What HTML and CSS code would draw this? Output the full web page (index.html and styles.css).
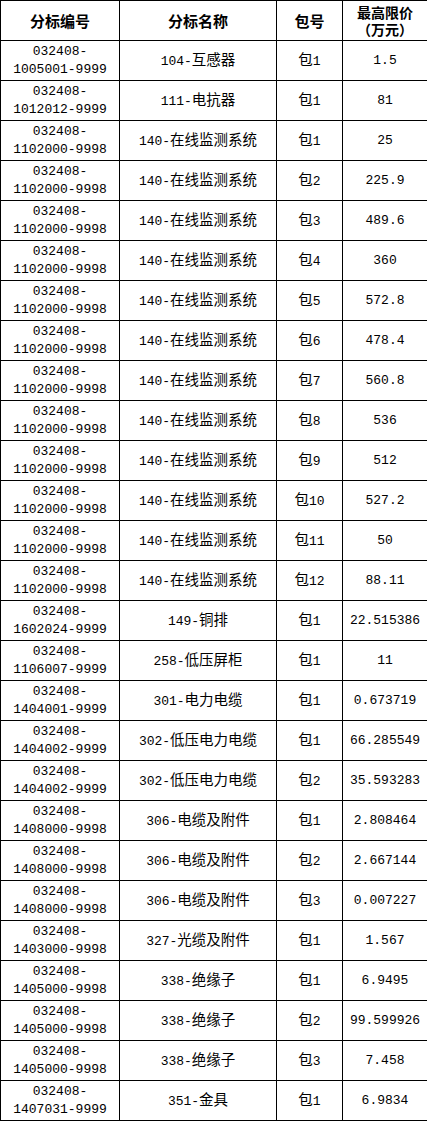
FILE: index.html
```html
<!DOCTYPE html>
<html lang="zh-CN">
<head>
<meta charset="utf-8">
<title>分标限价</title>
<link rel="stylesheet" href="styles.css">
</head>
<body>
<table class="price-table">
  <colgroup>
    <col class="c-code">
    <col class="c-name">
    <col class="c-pkg">
    <col class="c-price">
  </colgroup>
  <thead>
    <tr>
      <th>分标编号</th>
      <th>分标名称</th>
      <th>包号</th>
      <th class="two-line"><span class="hl">最高限价</span><span class="hl">（万元）</span></th>
    </tr>
  </thead>
  <tbody>
    <tr><td>032408-<br>1005001-9999</td><td>104-<span class="zh">互感器</span></td><td><span class="zh">包</span>1</td><td>1.5</td></tr>
    <tr><td>032408-<br>1012012-9999</td><td>111-<span class="zh">电抗器</span></td><td><span class="zh">包</span>1</td><td>81</td></tr>
    <tr><td>032408-<br>1102000-9998</td><td>140-<span class="zh">在线监测系统</span></td><td><span class="zh">包</span>1</td><td>25</td></tr>
    <tr><td>032408-<br>1102000-9998</td><td>140-<span class="zh">在线监测系统</span></td><td><span class="zh">包</span>2</td><td>225.9</td></tr>
    <tr><td>032408-<br>1102000-9998</td><td>140-<span class="zh">在线监测系统</span></td><td><span class="zh">包</span>3</td><td>489.6</td></tr>
    <tr><td>032408-<br>1102000-9998</td><td>140-<span class="zh">在线监测系统</span></td><td><span class="zh">包</span>4</td><td>360</td></tr>
    <tr><td>032408-<br>1102000-9998</td><td>140-<span class="zh">在线监测系统</span></td><td><span class="zh">包</span>5</td><td>572.8</td></tr>
    <tr><td>032408-<br>1102000-9998</td><td>140-<span class="zh">在线监测系统</span></td><td><span class="zh">包</span>6</td><td>478.4</td></tr>
    <tr><td>032408-<br>1102000-9998</td><td>140-<span class="zh">在线监测系统</span></td><td><span class="zh">包</span>7</td><td>560.8</td></tr>
    <tr><td>032408-<br>1102000-9998</td><td>140-<span class="zh">在线监测系统</span></td><td><span class="zh">包</span>8</td><td>536</td></tr>
    <tr><td>032408-<br>1102000-9998</td><td>140-<span class="zh">在线监测系统</span></td><td><span class="zh">包</span>9</td><td>512</td></tr>
    <tr><td>032408-<br>1102000-9998</td><td>140-<span class="zh">在线监测系统</span></td><td><span class="zh">包</span>10</td><td>527.2</td></tr>
    <tr><td>032408-<br>1102000-9998</td><td>140-<span class="zh">在线监测系统</span></td><td><span class="zh">包</span>11</td><td>50</td></tr>
    <tr><td>032408-<br>1102000-9998</td><td>140-<span class="zh">在线监测系统</span></td><td><span class="zh">包</span>12</td><td>88.11</td></tr>
    <tr><td>032408-<br>1602024-9999</td><td>149-<span class="zh">铜排</span></td><td><span class="zh">包</span>1</td><td>22.515386</td></tr>
    <tr><td>032408-<br>1106007-9999</td><td>258-<span class="zh">低压屏柜</span></td><td><span class="zh">包</span>1</td><td>11</td></tr>
    <tr><td>032408-<br>1404001-9999</td><td>301-<span class="zh">电力电缆</span></td><td><span class="zh">包</span>1</td><td>0.673719</td></tr>
    <tr><td>032408-<br>1404002-9999</td><td>302-<span class="zh">低压电力电缆</span></td><td><span class="zh">包</span>1</td><td>66.285549</td></tr>
    <tr><td>032408-<br>1404002-9999</td><td>302-<span class="zh">低压电力电缆</span></td><td><span class="zh">包</span>2</td><td>35.593283</td></tr>
    <tr><td>032408-<br>1408000-9998</td><td>306-<span class="zh">电缆及附件</span></td><td><span class="zh">包</span>1</td><td>2.808464</td></tr>
    <tr><td>032408-<br>1408000-9998</td><td>306-<span class="zh">电缆及附件</span></td><td><span class="zh">包</span>2</td><td>2.667144</td></tr>
    <tr><td>032408-<br>1408000-9998</td><td>306-<span class="zh">电缆及附件</span></td><td><span class="zh">包</span>3</td><td>0.007227</td></tr>
    <tr><td>032408-<br>1403000-9998</td><td>327-<span class="zh">光缆及附件</span></td><td><span class="zh">包</span>1</td><td>1.567</td></tr>
    <tr><td>032408-<br>1405000-9998</td><td>338-<span class="zh">绝缘子</span></td><td><span class="zh">包</span>1</td><td>6.9495</td></tr>
    <tr><td>032408-<br>1405000-9998</td><td>338-<span class="zh">绝缘子</span></td><td><span class="zh">包</span>2</td><td>99.599926</td></tr>
    <tr><td>032408-<br>1405000-9998</td><td>338-<span class="zh">绝缘子</span></td><td><span class="zh">包</span>3</td><td>7.458</td></tr>
    <tr><td>032408-<br>1407031-9999</td><td>351-<span class="zh">金具</span></td><td><span class="zh">包</span>1</td><td>6.9834</td></tr>
  </tbody>
</table>
</body>
</html>
```

FILE: styles.css
```css
html, body {
  margin: 0;
  padding: 0;
  background: #ffffff;
}

.price-table {
  border-collapse: collapse;
  width: 427px;
  table-layout: fixed;
  color: #000000;
  font-family: "Liberation Mono", "Noto Sans CJK SC", monospace;
  font-size: 13px;
  line-height: 18px;
}

.c-code { width: 119px; }
.c-name { width: 157px; }
.c-pkg { width: 66px; }
.c-price { width: 85px; }

.price-table th,
.price-table td {
  border: 1px solid #000000;
  padding: 0;
  text-align: center;
  vertical-align: middle;
}

.price-table tr {
  height: 40px;
}

.price-table th {
  font-family: "Noto Sans CJK SC", sans-serif;
  font-weight: 700;
  font-size: 15px;
  line-height: 18px;
}

.price-table .two-line {
  font-size: 14px;
  line-height: 17px;
}

.hl {
  display: block;
  height: 17px;
  overflow: visible;
}

.zh {
  font-family: "Noto Sans CJK SC", sans-serif;
  font-size: 14.5px;
}
```
